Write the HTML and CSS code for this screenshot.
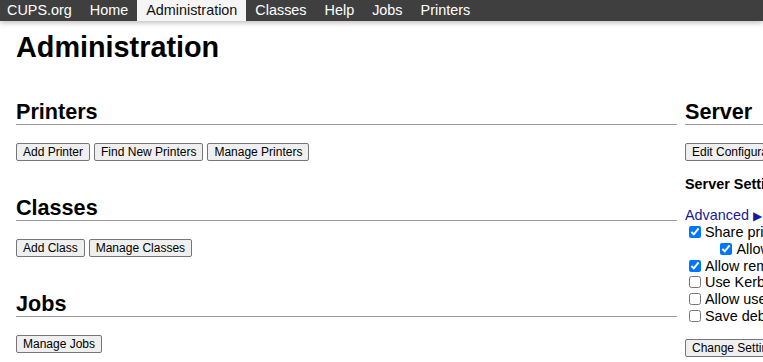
FILE: index.html
```html
<!DOCTYPE html>
<html lang="en">
<head>
<meta charset="utf-8">
<title>Administration - CUPS</title>
<link rel="stylesheet" href="styles.css">
</head>
<body>
<header class="header">
  <ul class="nav">
    <li><a class="first" href="#">CUPS.org</a></li>
    <li><a href="#">Home</a></li>
    <li><a class="active" href="#">Administration</a></li>
    <li><a href="#">Classes</a></li>
    <li><a href="#">Help</a></li>
    <li><a href="#">Jobs</a></li>
    <li><a href="#">Printers</a></li>
  </ul>
</header>
<main class="page">
  <h1 class="page-title">Administration</h1>
  <div class="row">
    <div class="col">
      <h2 class="title">Printers</h2>
      <div class="buttons">
        <button class="btn" type="button">Add Printer</button>
        <button class="btn" type="button">Find New Printers</button>
        <button class="btn" type="button">Manage Printers</button>
      </div>
      <h2 class="title">Classes</h2>
      <div class="buttons">
        <button class="btn" type="button">Add Class</button>
        <button class="btn" type="button">Manage Classes</button>
      </div>
      <h2 class="title">Jobs</h2>
      <div class="buttons">
        <button class="btn" type="button">Manage Jobs</button>
      </div>
    </div>
    <div class="col">
      <h2 class="title">Server</h2>
      <div class="buttons server-buttons">
        <button class="btn" type="button">Edit Configuration File</button>
      </div>
      <h3 class="subtitle">Server Settings:</h3>
      <form class="settings">
        <div class="line"><a class="link" href="#">Advanced <small class="arrow">&#x25B6;</small></a></div>
        <label class="opt"><input class="cb" type="checkbox" checked>Share printers connected to this system</label>
        <label class="opt indent"><input class="cb" type="checkbox" checked>Allow printing from the Internet</label>
        <label class="opt"><input class="cb" type="checkbox" checked>Allow remote administration</label>
        <label class="opt"><input class="cb" type="checkbox">Use Kerberos authentication (FAQ)</label>
        <label class="opt"><input class="cb" type="checkbox">Allow users to cancel any job (not just their own)</label>
        <label class="opt"><input class="cb" type="checkbox">Save debugging information for troubleshooting</label>
        <div class="buttons submit-row">
          <button class="btn" type="button">Change Settings</button>
        </div>
      </form>
    </div>
  </div>
</main>
</body>
</html>
```
FILE: styles.css
```css
html, body {
  margin: 0;
  padding: 0;
  overflow: hidden;
  background: #ffffff;
}

body {
  font-family: "Liberation Sans", Arial, sans-serif;
  font-size: 14.4px;
  color: #000000;
}

.header {
  position: relative;
  z-index: 1;
  height: 21px;
  background: #3f3f3f;
  box-shadow: 0 2px 5px rgba(0, 0, 0, 0.25);
}

.nav {
  display: flex;
  margin: 0;
  padding: 0;
  list-style: none;
}

.nav a {
  display: block;
  padding: 0 9px;
  line-height: 21px;
  color: #ffffff;
  text-decoration: none;
  white-space: nowrap;
}

.nav a.first {
  padding-left: 7px;
}

.nav a.active {
  background: #f5f5f5;
  color: #111111;
}

.page {
  padding: 0 16px;
}

.page-title {
  margin: 10px 0 34.5px;
  font-size: 28.8px;
  line-height: 33px;
  font-weight: bold;
}

.row {
  display: grid;
  grid-template-columns: 661px 661px;
  column-gap: 8px;
}

.col {
  min-width: 0;
}

.title {
  margin: 0 0 18.5px;
  font-size: 21.6px;
  line-height: 25px;
  font-weight: bold;
  border-bottom: 1px solid #9a9a9a;
  white-space: nowrap;
}

.buttons {
  display: flex;
  gap: 4px;
  height: 18px;
  margin-bottom: 33.5px;
}

.server-buttons {
  margin-bottom: 15.3px;
}

.btn {
  height: 18px;
  padding: 0 6px;
  font-family: "Liberation Sans", Arial, sans-serif;
  font-size: 12px;
  color: #000000;
  background: #efefef;
  border: 1px solid #767676;
  border-radius: 2px;
  white-space: nowrap;
}

.subtitle {
  margin: 0 0 14.5px;
  font-size: 14.4px;
  line-height: 16.5px;
  font-weight: bold;
  white-space: nowrap;
}

.settings {
  margin: 0;
}

.line {
  height: 16.5px;
  line-height: 16.5px;
  white-space: nowrap;
}

.link {
  color: #1a1a99;
  text-decoration: none;
}

.arrow {
  font-size: 12px;
}

.opt {
  display: flex;
  align-items: center;
  height: 16.7px;
  white-space: nowrap;
}

.cb {
  width: 12px;
  height: 12px;
  margin: 0 4.4px 0 3.6px;
  flex: none;
}

.indent .cb {
  margin-left: 35px;
}

.submit-row {
  margin-top: 14.8px;
  margin-bottom: 0;
}
```
